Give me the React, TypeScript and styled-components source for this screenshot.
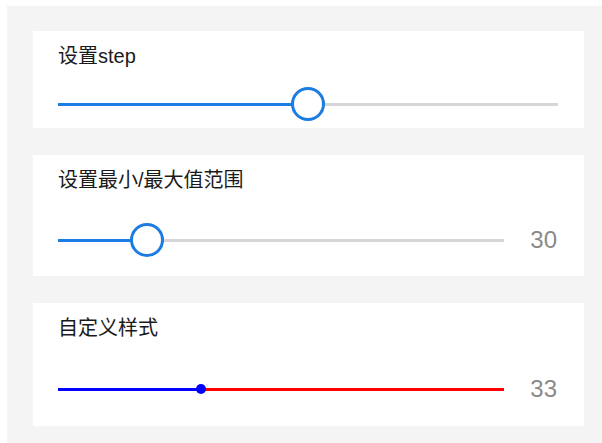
import React from "react";
import styled, { createGlobalStyle } from "styled-components";

const GlobalStyle = createGlobalStyle`
  html, body {
    margin: 0;
    padding: 0;
    background: #ffffff;
  }
  body {
    font-family: "Liberation Sans", "Noto Sans CJK SC", sans-serif;
  }
`;

const Page = styled.div`
  margin: 6px 0 0 7px;
  background: #f4f4f4;
  padding: 25px 18px 20px 26px;
  display: flex;
  flex-direction: column;
  gap: 27px;
`;

const Card = styled.section<{ $gap: number; $bottom: number }>`
  background: #ffffff;
  padding: 11px 26px ${(p) => p.$bottom}px 25px;
  display: flex;
  flex-direction: column;
  gap: ${(p) => p.$gap}px;
`;

const Title = styled.div`
  font-size: 20px;
  line-height: 28px;
  color: #1a1a1a;
`;

const Row = styled.div`
  display: flex;
  align-items: center;
  height: 36px;
`;

const Track = styled.div<{ $rest: string }>`
  position: relative;
  flex: 1;
  height: 3px;
  background: ${(p) => p.$rest};
`;

const Fill = styled.div<{ $color: string }>`
  position: absolute;
  left: 0;
  top: 0;
  bottom: 0;
  background: ${(p) => p.$color};
`;

const RingThumb = styled.div`
  position: absolute;
  top: 50%;
  width: 34px;
  height: 34px;
  box-sizing: border-box;
  border: 3px solid #1b7ce4;
  border-radius: 50%;
  background: #ffffff;
  transform: translate(-50%, -50%);
`;

const DotThumb = styled.div`
  position: absolute;
  top: 50%;
  width: 10px;
  height: 10px;
  border-radius: 50%;
  background: #0000ff;
  transform: translate(-50%, -50%);
`;

const Value = styled.div`
  width: 53px;
  text-align: right;
  font-size: 24px;
  line-height: 28px;
  color: #8a8a8a;
  padding-right: 1px;
`;

type SliderProps = {
  percent: number;
  fill: string;
  rest: string;
  dot?: boolean;
};

const Slider = ({ percent, fill, rest, dot }: SliderProps) => (
  <Track $rest={rest}>
    <Fill $color={fill} style={{ width: `${percent}%` }} />
    {dot ? (
      <DotThumb style={{ left: `${percent}%` }} />
    ) : (
      <RingThumb style={{ left: `${percent}%` }} />
    )}
  </Track>
);

export default function App() {
  return (
    <>
      <GlobalStyle />
      <Page>
        <Card $gap={16} $bottom={6}>
          <Title>设置step</Title>
          <Row>
            <Slider percent={50} fill="#1b7ce4" rest="#d6d6d6" />
          </Row>
        </Card>
        <Card $gap={28} $bottom={18}>
          <Title>设置最小/最大值范围</Title>
          <Row>
            <Slider percent={20} fill="#1b7ce4" rest="#d6d6d6" />
            <Value>30</Value>
          </Row>
        </Card>
        <Card $gap={29} $bottom={19}>
          <Title>自定义样式</Title>
          <Row>
            <Slider percent={32} fill="#0000ff" rest="#ff0000" dot />
            <Value>33</Value>
          </Row>
        </Card>
      </Page>
    </>
  );
}
